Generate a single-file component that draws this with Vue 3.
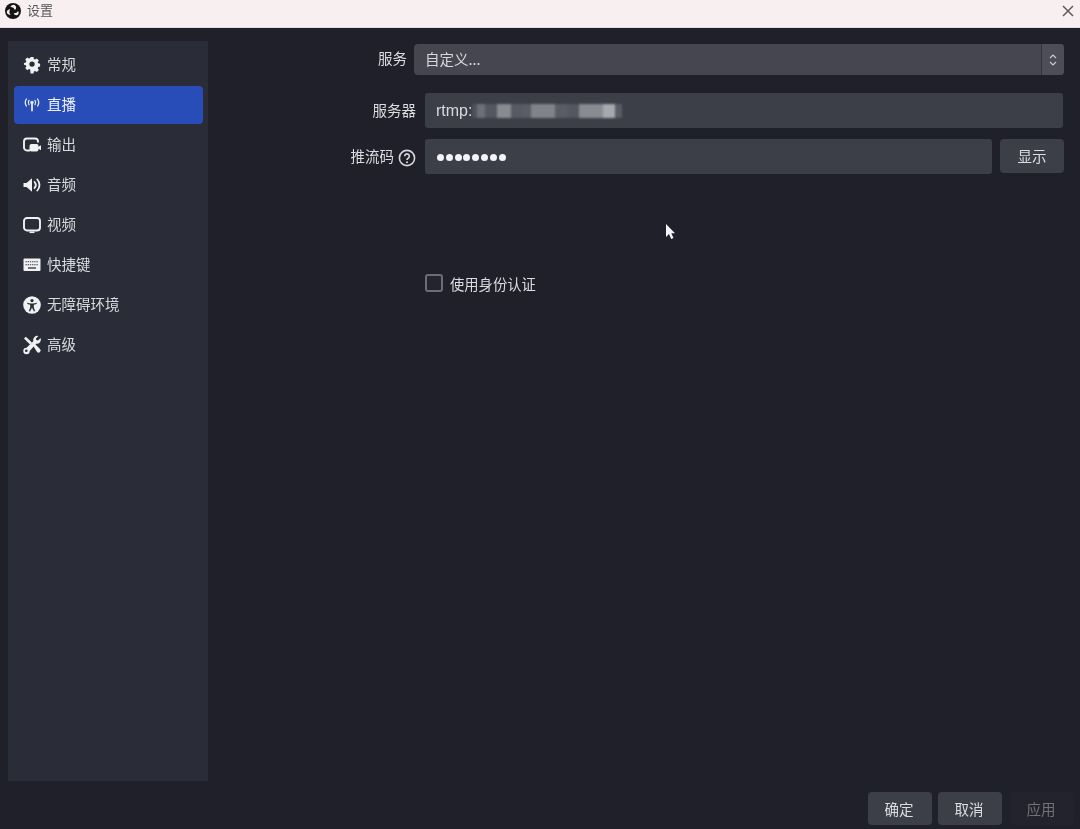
<script setup>
const nav = [
  { id: 'gear', label: '常规' },
  { id: 'stream', label: '直播', active: true },
  { id: 'output', label: '输出' },
  { id: 'audio', label: '音频' },
  { id: 'video', label: '视频' },
  { id: 'keys', label: '快捷键' },
  { id: 'access', label: '无障碍环境' },
  { id: 'tools', label: '高级' }
]
const mosaic = [
  { w: 5, o: 0.12 }, { w: 8, o: 0.32 }, { w: 12, o: 0.16 }, { w: 14, o: 0.5 }, { w: 11, o: 0.18 },
  { w: 9, o: 0.2 }, { w: 24, o: 0.45 }, { w: 13, o: 0.2 }, { w: 11, o: 0.16 }, { w: 24, o: 0.5 },
  { w: 12, o: 0.7 }, { w: 7, o: 0.2 }
]
</script>

<template>
  <div class="window">
    <header class="titlebar">
      <svg class="logo" viewBox="0 0 20 20" width="16" height="16">
        <circle cx="10" cy="10" r="10" fill="#141414" />
        <path d="M10.400 2.200a3.500 3.500 0 0 1 3.300 4.700 3.400 3.400 0 0 1-1.300 1.700 5.500 5.500 0 0 0-5.800-3.500 4.400 4.400 0 0 1 3.800-2.900Z" fill="#f8f0f0" />
        <path d="M3 13.300a3.500 3.500 0 0 1 1.300-5 3.400 3.400 0 0 1 2.100-.3 5.500 5.500 0 0 0 .7 6.600 4.400 4.400 0 0 1-4.100-1.300Z" fill="#f8f0f0" />
        <path d="M16.900 13.300a3.500 3.500 0 0 1-5.100 1.200 3.400 3.400 0 0 1-1-1.700 5.500 5.500 0 0 0 5.600-2.900 4.400 4.400 0 0 1 .5 3.400Z" fill="#f8f0f0" />
      </svg>
      <span class="title">设置</span>
      <svg class="close" viewBox="0 0 12 12" width="12" height="12">
        <path d="M1 1l10 10M11 1L1 11" stroke="#5c5c60" stroke-width="1.500" fill="none" />
      </svg>
    </header>

    <div class="body">
      <aside class="sidebar">
        <div v-for="item in nav" :key="item.id" class="nav-item" :class="{ active: item.active }">
          <svg class="nav-icon" viewBox="0 0 20 20" width="20" height="20">
            <g v-if="item.id === 'gear'">
              <path fill-rule="evenodd" fill="#f1f1f3" d="M8.400 2.500h3.200l.4 2.200 1.300.6 1.900-1.200 2.200 2.300-1.200 1.800.5 1.300 2.100.5v3l-2.100.5-.5 1.300 1.200 1.800-2.200 2.300-1.900-1.200-1.300.6-.4 2.100H8.400L8 16.300l-1.300-.6-1.900 1.200-2.200-2.300 1.200-1.800-.5-1.300-2.100-.5V9l2.100-.5.5-1.300-1.200-1.800 2.200-2.300 1.900 1.200L8 3.700ZM10 7.400a2.900 2.900 0 1 0 0 5.800 2.900 2.900 0 0 0 0-5.800Z" transform="translate(0 -1.200) scale(.92) translate(.9 .9)" />
            </g>
            <g v-else-if="item.id === 'stream'" fill="none" stroke="#e6ebfa" stroke-width="1.300" stroke-linecap="round">
              <circle cx="10" cy="7.500" r="1.700" fill="#e6ebfa" stroke="none" />
              <path d="M10 8.500V15.500" stroke-width="1.800" />
              <path d="M7 5.400a3.600 3.600 0 0 0 0 4.200M13 5.400a3.600 3.600 0 0 1 0 4.200M4.400 4a6.400 6.400 0 0 0 0 7M15.600 4a6.400 6.400 0 0 1 0 7" />
            </g>
            <g v-else-if="item.id === 'output'">
              <path d="M8 15.500H5A3 3 0 0 1 2 12.500V6.500a3 3 0 0 1 3-3h8a3 3 0 0 1 3 3v1" fill="none" stroke="#f1f1f3" stroke-width="1.900" />
              <rect x="7.500" y="9" width="9" height="7.500" rx="2" fill="#f1f1f3" />
              <path d="M16 12l3-1.800v5L16 13.500Z" fill="#f1f1f3" />
            </g>
            <g v-else-if="item.id === 'audio'">
              <path d="M1.500 8h3l5.500-4.800v13.600L4.500 12h-3Z" fill="#f1f1f3" />
              <path d="M12.500 7a4.500 4.500 0 0 1 0 6M15.300 4.500a8 8 0 0 1 0 11" fill="none" stroke="#f1f1f3" stroke-width="1.800" stroke-linecap="round" />
            </g>
            <g v-else-if="item.id === 'video'">
              <rect x="2" y="3" width="16" height="12.500" rx="3" fill="none" stroke="#f1f1f3" stroke-width="1.900" />
              <path d="M7.500 17.300h5" stroke="#f1f1f3" stroke-width="1.500" />
            </g>
            <g v-else-if="item.id === 'keys'">
              <rect x="1.500" y="3.500" width="17" height="12.500" rx="1" fill="#f1f1f3" />
              <path d="M3.500 6.800h13M3.500 9.800h13" stroke="#2a2d37" stroke-width="1.100" stroke-dasharray="1.300 .9" />
              <path d="M6 13h8" stroke="#2a2d37" stroke-width="1.300" />
            </g>
            <g v-else-if="item.id === 'access'">
              <circle cx="10" cy="10" r="8.800" fill="#f1f1f3" />
              <circle cx="10" cy="5.600" r="1.600" fill="#2a2d37" />
              <path d="M5.200 7.800 8.500 8.500h3l3.300-.7-.2 1.200-2.800.8v2.500l1.300 3.700-1.100.4-2-3.600-2 3.600-1.100-.4 1.300-3.700V9.800L5.400 9Z" fill="#2a2d37" />
            </g>
            <g v-else fill="#f1f1f3">
              <path d="M2 3.500 3.800 1.800l6.200 5.700-2 2Z" />
              <path d="M11 10.500l1.800-1.800 5.200 5.200a2 2 0 0 1-.1 3 2 2 0 0 1-3-.1Z" />
              <path d="M18.600 3 16 5.400l-1.700-.4-.4-1.600L16.400 1a4.200 4.200 0 0 0-5.100 5.300L4.500 12.800A3.200 3.200 0 1 0 7.700 16l6.400-7.200A4.200 4.200 0 0 0 18.600 3Z" />
              <circle cx="4.300" cy="15.800" r="1.300" fill="#2a2d37" />
            </g>
          </svg>
          <span class="nav-label">{{ item.label }}</span>
        </div>
      </aside>

      <main class="content">
        <div class="form">
          <div class="row row-service">
            <label class="label">服务</label>
            <div class="select">
              <span class="select-text">自定义...</span>
              <span class="spin">
                <svg viewBox="0 0 10 16" width="10" height="16">
                  <path d="M2 6l3-3 3 3M2 10l3 3 3-3" fill="none" stroke="#c8c9ce" stroke-width="1.200" />
                </svg>
              </span>
            </div>
          </div>

          <div class="row row-server">
            <label class="label wide">服务器</label>
            <div class="input">
              <span>rtmp:</span>
              <span class="mosaic">
                <i v-for="(m, i) in mosaic" :key="i" :style="{ width: m.w + 'px', opacity: m.o }"></i>
              </span>
            </div>
          </div>

          <div class="row row-key">
            <label class="label wide">
              推流码
              <svg class="help" viewBox="0 0 18 18" width="18" height="18">
                <circle cx="9" cy="9" r="7.600" fill="none" stroke="#d5d6da" stroke-width="1.600" />
                <path d="M6.700 7.200a2.300 2.300 0 1 1 3.500 2c-.8.500-1.200.9-1.200 1.800" fill="none" stroke="#d5d6da" stroke-width="1.600" />
                <circle cx="9" cy="13.200" r="1" fill="#d5d6da" />
              </svg>
            </label>
            <div class="input password">
              <i v-for="n in 8" :key="n" class="dot"></i>
            </div>
            <button class="btn show">显示</button>
          </div>

          <label class="check-row">
            <span class="checkbox"></span>
            <span>使用身份认证</span>
          </label>
        </div>

        <svg class="cursor" viewBox="0 0 12 18" width="12" height="18">
          <path d="M1 1v13l3-3 2.200 5 2.300-1-2.200-4.800H10Z" fill="#f5f5f7" />
        </svg>

        <footer class="footer">
          <button class="btn">确定</button>
          <button class="btn">取消</button>
          <button class="btn disabled">应用</button>
        </footer>
      </main>
    </div>
  </div>
</template>

<style scoped>
.window {
  width: 1080px;
  height: 829px;
  display: flex;
  flex-direction: column;
  overflow: hidden;
  background: #1f2029;
  color: #e4e5e9;
  font-family: "Noto Sans CJK SC", "Liberation Sans", sans-serif;
  font-size: 14.500px;
  filter: blur(0.4px);
}
.titlebar {
  height: 28px;
  flex: none;
  box-sizing: border-box;
  display: flex;
  align-items: center;
  padding: 0 6px 5px 5px;
  background: #f8f0f0;
  border-bottom: 1px solid #e3dede;
  color: #55555a;
}
.logo { flex: none; }
.title { margin: -3px 0 0 6px; font-size: 13px; line-height: 1; }
.close { margin-left: auto; }
.body {
  flex: 1;
  display: flex;
  min-height: 0;
}
.sidebar {
  flex: none;
  width: 200px;
  margin: 13px 0 48px 8px;
  padding: 5px 5px 4px 6px;
  box-sizing: border-box;
  background: #2a2d37;
  display: flex;
  flex-direction: column;
  gap: 2px;
}
.nav-item {
  height: 38px;
  box-sizing: border-box;
  border-radius: 4px;
  display: flex;
  align-items: center;
  padding: 0 0 2px 8px;
  color: #d9dadf;
}
.nav-item.active {
  background: #284cb8;
  color: #eef1fb;
}
.nav-icon { flex: none; margin: 2px 5px 0 0; }
.nav-label { margin-top: -1px; }
.content {
  flex: 1;
  position: relative;
  display: flex;
  flex-direction: column;
  justify-content: space-between;
  min-width: 0;
}
.form {
  display: flex;
  flex-direction: column;
  padding: 16px 16px 0 0;
}
.row {
  display: flex;
  align-items: center;
}
.row-service {
  height: 31px;
  gap: 7px;
}
.row-service .label { width: 199px; margin-top: -4px; }
.row-server {
  height: 35px;
  margin-top: 18px;
  gap: 9px;
}
.row-key {
  height: 35px;
  margin-top: 11px;
  gap: 8px;
}
.label {
  flex: none;
  text-align: right;
  color: #dcdde1;
  white-space: nowrap;
}
.wide { width: 208px; margin-top: -3px; }
.row-key .wide {
  display: flex;
  align-items: center;
  justify-content: flex-end;
  gap: 4px;
  margin-right: 1px;
}
.help { margin-top: 5px; flex: none; }
.select {
  flex: 1;
  height: 31px;
  border-radius: 4px;
  background: #454650;
  display: flex;
  align-items: center;
  justify-content: space-between;
  padding-left: 11px;
  color: #d9dadf;
  overflow: hidden;
}
.select-text { margin-top: -2px; }
.spin {
  width: 22px;
  height: 100%;
  display: flex;
  align-items: center;
  justify-content: center;
  background: #4c4d57;
  border-left: 1px solid #34353e;
}
.input {
  flex: 1;
  height: 35px;
  box-sizing: border-box;
  border-radius: 3px;
  background: #3c3e48;
  display: flex;
  align-items: center;
  padding-left: 11px;
  color: #d9dadf;
  font-family: "Liberation Sans", sans-serif;
  font-size: 16px;
}
.row-server .input { margin-right: 1px; }
.mosaic {
  display: flex;
  height: 14px;
  filter: blur(1px);
}
.mosaic i {
  display: block;
  height: 100%;
  background: #d6d7dc;
}
.password { gap: 1.800px; padding-left: 12px; }
.dot {
  width: 7px;
  height: 7px;
  margin-top: 1px;
  border-radius: 50%;
  background: #f4f4f6;
}
.btn {
  width: 64px;
  height: 33px;
  flex: none;
  padding: 0 0 2px;
  border: 0;
  border-radius: 4px;
  background: #3c3e48;
  color: #dcdde1;
  font: inherit;
}
.show { align-self: flex-start; height: 34px; }
.check-row {
  display: flex;
  align-items: center;
  gap: 7px;
  margin: 99px 0 0 217px;
  color: #dcdde1;
  font-size: 14.300px;
}
.checkbox {
  width: 18px;
  height: 18px;
  margin-top: -2px;
  box-sizing: border-box;
  border: 2px solid #6b6c75;
  border-radius: 3px;
  background: #23242d;
}
.footer {
  display: flex;
  justify-content: flex-end;
  gap: 6px;
  padding: 0 6px 4px 0;
}
.footer .btn { padding: 0 2px 1px 0; }
.footer .disabled {
  margin-left: 2px;
  background: #22232c;
  color: #71727a;
}
.cursor {
  position: absolute;
  left: 457px;
  top: 195px;
}
</style>
